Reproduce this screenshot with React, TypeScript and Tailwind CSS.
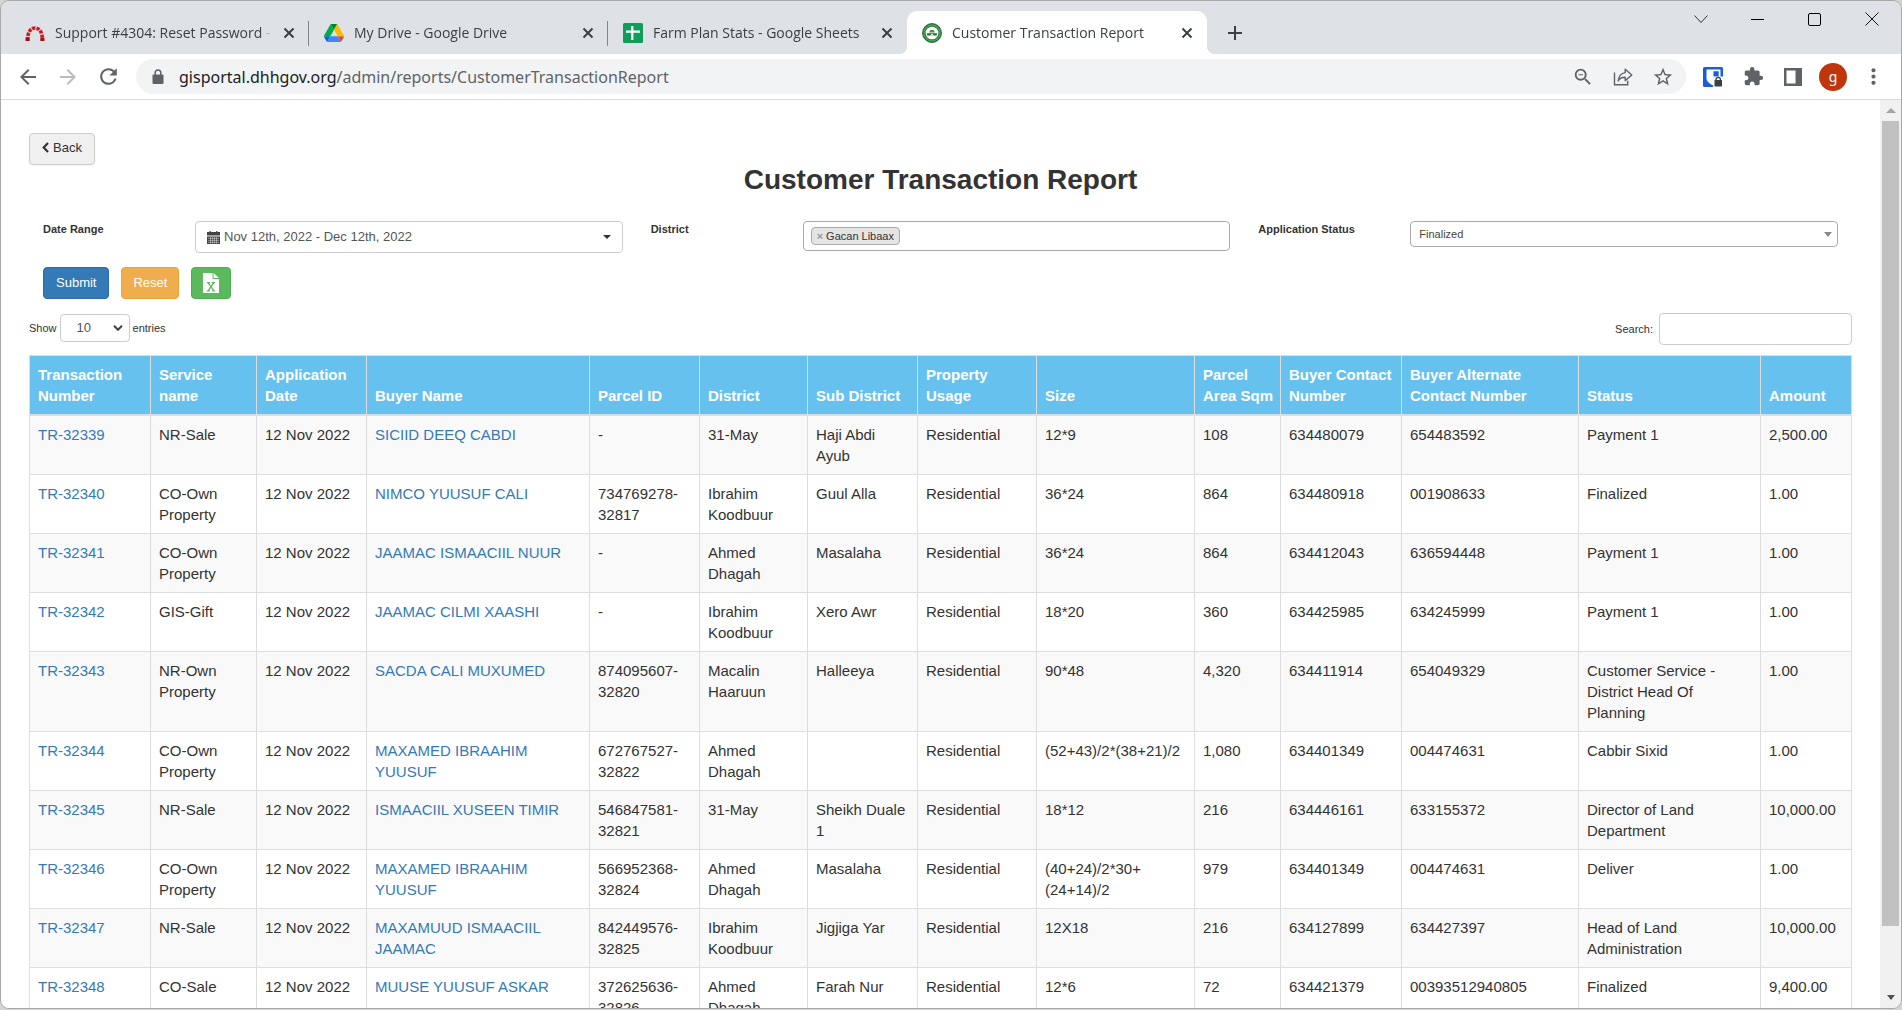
import React from 'react';
import {
  MdArrowBack,
  MdArrowForward,
  MdExtension,
  MdMoreVert,
  MdRefresh,
  MdStarBorder,
  MdZoomOut,
} from 'react-icons/md';

interface Tab {
  title: string;
  icon: React.ReactNode;
  active?: boolean;
  divider?: boolean;
}

interface Column {
  label: string;
  width: string;
}

/* ---------- Icons ---------- */

const RedmineIcon = () => (
  <svg viewBox="0 0 20 20" className="size-5 shrink-0" fill="none">
    <path d="M2.600 17.500C2.600 9 5.500 5 10 5s7.400 4 7.400 12.500" stroke="#d5161d" strokeWidth="3.600" strokeDasharray="3.300 1.100" />
    <path d="M.6 14.500h4V18h-4zM15.400 14.500h4V18h-4z" fill="#a80f14" />
  </svg>
);

const DriveIcon = () => (
  <svg viewBox="0 0 87.3 78" className="size-5 shrink-0">
    <path d="m6.6 66.85 3.85 6.65c.8 1.4 1.95 2.5 3.3 3.3l13.75-23.8h-27.5c0 1.55.4 3.1 1.2 4.5z" fill="#0066da" />
    <path d="m43.65 25-13.75-23.8c-1.35.8-2.5 1.9-3.3 3.3l-25.4 44a9.06 9.06 0 0 0-1.2 4.5h27.5z" fill="#00ac47" />
    <path d="m73.55 76.8c1.35-.8 2.5-1.9 3.3-3.3l1.6-2.75 7.65-13.25c.8-1.4 1.2-2.95 1.2-4.5h-27.5l5.85 11.5z" fill="#ea4335" />
    <path d="m43.65 25 13.75-23.8c-1.35-.8-2.9-1.2-4.5-1.2h-18.5c-1.6 0-3.15.45-4.5 1.2z" fill="#00832d" />
    <path d="m59.8 53h-32.3l-13.75 23.8c1.35.8 2.9 1.2 4.5 1.2h50.8c1.6 0 3.15-.45 4.5-1.2z" fill="#4285f4" />
    <path d="m73.4 26.5-12.7-22c-.8-1.4-1.95-2.5-3.3-3.3l-13.75 23.8 16.15 28h27.45c0-1.55-.4-3.1-1.2-4.5z" fill="#ffba00" />
  </svg>
);

const SheetsIcon = () => (
  <svg viewBox="0 0 20 20" className="size-5 shrink-0">
    <rect width="20" height="20" rx="1.5" fill="#0f9d58" />
    <path d="M8.2 3h2.2v4.5H17v2.2h-6.6V17H8.2V9.7H3V7.5h5.2z" fill="#fff" />
  </svg>
);

const PortalIcon = () => (
  <svg viewBox="0 0 20 20" className="size-5 shrink-0" fill="none">
    <circle cx="10" cy="10" r="9.4" fill="#2f8a3d" stroke="#2a5f33" />
    <circle cx="10" cy="10" r="7.9" stroke="#8cc794" strokeWidth=".8" strokeDasharray="1 .8" />
    <circle cx="10" cy="10" r="6.3" fill="#fff" />
    <path d="M7 9.500 8.300 7h3.400L13 9.500z" fill="#3d9a4b" />
    <path d="M4.800 10.200h10.400l-.6 2.400H5.400z" fill="#226b30" />
    <path d="M8 12.600 10 10.800l2 1.800z" fill="#fff" />
  </svg>
);

const LockIcon = () => (
  <svg viewBox="0 0 12 15" className="h-[15px] w-3 shrink-0">
    <path d="M1.500 5.500h9q1 0 1 1V14q0 1-1 1h-9q-1 0-1-1V6.500q0-1 1-1z" fill="#5f6368" />
    <path d="M3.200 6V3.700a2.800 2.800 0 0 1 5.600 0V6" fill="none" stroke="#5f6368" strokeWidth="1.500" />
  </svg>
);

const ShareIcon = () => (
  <svg viewBox="0 0 20 20" className="size-5" fill="none" stroke="#5f6368" strokeWidth="1.4">
    <path d="M1.500 5.500v12.300h13.200v-4" />
    <path d="M12.200 2.200 18.800 8l-6.600 5.600v-3.300c-3.400 0-5.500 1-7 3.500.5-4 2.800-7.600 7-8.200z" strokeLinejoin="round" />
  </svg>
);

const BitwardenIcon = () => (
  <svg viewBox="0 0 20 20" className="size-5">
    <rect width="20" height="20" rx="1.500" fill="#175ddc" />
    <path d="M3.500 2.500h14v9c0 3-3.500 5.500-7 7-3.500-1.500-7-4-7-7z" fill="#fff" />
    <path d="M10.500 4.300h5.200v6.200c0 2-2.500 4.500-5.200 5.700z" fill="#175ddc" />
    <rect x="10" y="9.500" width="10" height="10.500" fill="#fff" />
    <path d="M11.500 13h7.500v6.500h-7.500z" fill="#3c4043" />
    <path d="M13 13.500v-1a2.200 2.200 0 0 1 4.400 0v1" fill="none" stroke="#3c4043" strokeWidth="1.300" />
  </svg>
);

const SidePanelIcon = () => (
  <svg viewBox="0 0 18 18" className="size-[18px]">
    <path d="M0 0h18v18H0zM2.500 2.500v13h9v-13z" fill="#5f6368" fillRule="evenodd" />
  </svg>
);

const CloseIcon = () => (
  <svg viewBox="0 0 12 12" className="size-3" stroke="#3c4043" strokeWidth="2">
    <path d="m1.500 1.500 9 9m0-9-9 9" />
  </svg>
);

const CalendarIcon = () => (
  <svg viewBox="0 0 13 13" className="size-[13px]" fill="#444">
    <path d="M0 1h2.500V0h1.300v1h5.400V0h1.300v1H13v3.600H0z" />
    <path d="M0 5.400h13V13H0z" />
    <path d="M1 7.400h11M1 9.400h11M1 11.400h11M3.500 6v6.500M5.500 6v6.500M7.500 6v6.500M9.500 6v6.500" stroke="#fff" strokeWidth=".4" />
  </svg>
);

const ExcelIcon = () => (
  <svg viewBox="0 0 16 20" className="h-5 w-4">
    <path d="M0 0h9.500v6H16v14H0z" fill="#fff" />
    <path d="M10.500 0 16 5h-5.500z" fill="#fff" />
    <path d="M4 9h3v1.200h-.7L8 12.800l1.700-2.600H9V9h3v1.200h-.7L8.800 13.700l2.700 3.700h.8v1.200H9.200v-1.200h.6L8 14.800l-1.800 2.600h.6v1.200H3.700v-1.200h.8l2.700-3.700-2.500-3.500H4z" fill="#5cb85c" />
  </svg>
);

/* ---------- Data ---------- */

const tabs: Tab[] = [
  { title: 'Support #4304: Reset Password - ', icon: <RedmineIcon />, divider: true },
  { title: 'My Drive - Google Drive', icon: <DriveIcon />, divider: true },
  { title: 'Farm Plan Stats - Google Sheets', icon: <SheetsIcon /> },
  { title: 'Customer Transaction Report', icon: <PortalIcon />, active: true },
];

const columns: Column[] = [
  { label: 'Transaction Number', width: 'w-[121px]' },
  { label: 'Service name', width: 'w-[106px]' },
  { label: 'Application Date', width: 'w-[110px]' },
  { label: 'Buyer Name', width: 'w-[223px]' },
  { label: 'Parcel ID', width: 'w-[110px]' },
  { label: 'District', width: 'w-[108px]' },
  { label: 'Sub District', width: 'w-[110px]' },
  { label: 'Property Usage', width: 'w-[119px]' },
  { label: 'Size', width: 'w-[158px]' },
  { label: 'Parcel Area Sqm', width: 'w-[86px]' },
  { label: 'Buyer Contact Number', width: 'w-[121px]' },
  { label: 'Buyer Alternate Contact Number', width: 'w-[177px]' },
  { label: 'Status', width: 'w-[182px]' },
  { label: 'Amount', width: 'w-[91px]' },
];

const rows: string[][] = [
  ['TR-32339', 'NR-Sale', '12 Nov 2022', 'SICIID DEEQ CABDI', '-', '31-May', 'Haji Abdi Ayub', 'Residential', '12*9', '108', '634480079', '654483592', 'Payment 1', '2,500.00'],
  ['TR-32340', 'CO-Own Property', '12 Nov 2022', 'NIMCO YUUSUF CALI', '734769278-32817', 'Ibrahim Koodbuur', 'Guul Alla', 'Residential', '36*24', '864', '634480918', '001908633', 'Finalized', '1.00'],
  ['TR-32341', 'CO-Own Property', '12 Nov 2022', 'JAAMAC ISMAACIIL NUUR', '-', 'Ahmed Dhagah', 'Masalaha', 'Residential', '36*24', '864', '634412043', '636594448', 'Payment 1', '1.00'],
  ['TR-32342', 'GIS-Gift', '12 Nov 2022', 'JAAMAC CILMI XAASHI', '-', 'Ibrahim Koodbuur', 'Xero Awr', 'Residential', '18*20', '360', '634425985', '634245999', 'Payment 1', '1.00'],
  ['TR-32343', 'NR-Own Property', '12 Nov 2022', 'SACDA CALI MUXUMED', '874095607-32820', 'Macalin Haaruun', 'Halleeya', 'Residential', '90*48', '4,320', '634411914', '654049329', 'Customer Service - District Head Of Planning', '1.00'],
  ['TR-32344', 'CO-Own Property', '12 Nov 2022', 'MAXAMED IBRAAHIM YUUSUF', '672767527-32822', 'Ahmed Dhagah', '', 'Residential', '(52+43)/2*(38+21)/2', '1,080', '634401349', '004474631', 'Cabbir Sixid', '1.00'],
  ['TR-32345', 'NR-Sale', '12 Nov 2022', 'ISMAACIIL XUSEEN TIMIR', '546847581-32821', '31-May', 'Sheikh Duale 1', 'Residential', '18*12', '216', '634446161', '633155372', 'Director of Land Department', '10,000.00'],
  ['TR-32346', 'CO-Own Property', '12 Nov 2022', 'MAXAMED IBRAAHIM YUUSUF', '566952368-32824', 'Ahmed Dhagah', 'Masalaha', 'Residential', '(40+24)/2*30+(24+14)/2', '979', '634401349', '004474631', 'Deliver', '1.00'],
  ['TR-32347', 'NR-Sale', '12 Nov 2022', 'MAXAMUUD ISMAACIIL JAAMAC', '842449576-32825', 'Ibrahim Koodbuur', 'Jigjiga Yar', 'Residential', '12X18', '216', '634127899', '634427397', 'Head of Land Administration', '10,000.00'],
  ['TR-32348', 'CO-Sale', '12 Nov 2022', 'MUUSE YUUSUF ASKAR', '372625636-32826', 'Ahmed Dhagah', 'Farah Nur', 'Residential', '12*6', '72', '634421379', '00393512940805', 'Finalized', '9,400.00'],
];

const linkColumns = [0, 3];

/* ---------- Browser chrome ---------- */

const TabItem: React.FC<{ tab: Tab }> = ({ tab }) => (
  <div
    className={
      tab.active
        ? 'relative flex w-[300px] items-center gap-[10px] rounded-t-[10px] bg-white pl-[15px] pr-3'
        : 'relative flex w-[299px] items-center gap-[10px] pl-[15px] pr-3'
    }
  >
    {tab.active && (
      <>
        <span className="absolute -left-2 bottom-0 size-2 bg-[radial-gradient(circle_at_0_0,#dee1e6_8px,#fff_8px)]" />
        <span className="absolute -right-2 bottom-0 size-2 bg-[radial-gradient(circle_at_100%_0,#dee1e6_8px,#fff_8px)]" />
      </>
    )}
    {tab.icon}
    <span className="min-w-0 flex-1 overflow-hidden whitespace-nowrap mask-r-from-95% text-[14px]">{tab.title}</span>
    <button aria-label="Close tab" className="flex size-4 items-center justify-center">
      <CloseIcon />
    </button>
    {tab.divider && <span className="absolute right-0 top-[10px] h-[25px] w-px bg-[#80868b]" />}
  </div>
);

const TabStrip = () => (
  <div className="flex h-[53px] shrink-0 justify-between bg-[#dee1e6] font-['Open_Sans',sans-serif] text-[#3c4043]">
    <div className="flex pl-[9px] pt-[10px]">
      {tabs.map((tab) => (
        <TabItem key={tab.title} tab={tab} />
      ))}
      <button aria-label="New tab" className="ml-2 flex w-10 items-center justify-center">
        <svg viewBox="0 0 14 14" className="size-[14px]" stroke="#3c4043" strokeWidth="2">
          <path d="M7 0v14M0 7h14" />
        </svg>
      </button>
    </div>
    <div className="flex h-9 text-black">
      <button aria-label="Search tabs" className="flex w-[57px] items-center justify-center">
        <svg viewBox="0 0 14 14" className="size-[14px]" fill="none" stroke="#333">
          <path d="m.5 3.500 6.500 7 6.500-7" />
        </svg>
      </button>
      <button aria-label="Minimize" className="flex w-[57px] items-center justify-center">
        <span className="h-px w-[13px] bg-black" />
      </button>
      <button aria-label="Maximize" className="flex w-[57px] items-center justify-center">
        <span className="size-[13px] rounded-[2px] border border-black" />
      </button>
      <button aria-label="Close" className="flex w-[58px] items-center justify-center">
        <svg viewBox="0 0 14 14" className="size-[14px]" stroke="#111">
          <path d="m.5.5 13 13m0-13-13 13" />
        </svg>
      </button>
    </div>
  </div>
);

const iconButton = 'flex h-full w-10 shrink-0 items-center justify-center';

const Toolbar = () => (
  <div className="flex h-[46px] shrink-0 items-center border-b border-[#dadce0] bg-white pl-[7px] pr-2 font-['Noto_Sans',sans-serif] text-[#5f6368]">
    <button aria-label="Back" className={iconButton}>
      <MdArrowBack size={24} />
    </button>
    <button aria-label="Forward" className={iconButton}>
      <MdArrowForward size={24} className="text-[#babcbe]" />
    </button>
    <button aria-label="Reload" className={iconButton}>
      <MdRefresh size={25} />
    </button>
    <div className="ml-2 flex h-[35px] flex-1 items-center rounded-full bg-[#f1f3f4] pl-4 pr-[3px]">
      <LockIcon />
      <span className="ml-[15px] flex-1 whitespace-nowrap text-[16px]">
        <span className="text-[#202124]">gisportal.dhhgov.org</span>/admin/reports/CustomerTransactionReport
      </span>
      <button aria-label="Zoom" className={iconButton}>
        <MdZoomOut size={22} />
      </button>
      <button aria-label="Share" className={iconButton}>
        <ShareIcon />
      </button>
      <button aria-label="Bookmark" className={iconButton}>
        <MdStarBorder size={22} />
      </button>
    </div>
    <button aria-label="Bitwarden" className={`ml-[7px] ${iconButton}`}>
      <BitwardenIcon />
    </button>
    <button aria-label="Extensions" className={iconButton}>
      <MdExtension size={21} />
    </button>
    <button aria-label="Side panel" className={iconButton}>
      <SidePanelIcon />
    </button>
    <button aria-label="Profile" className={iconButton}>
      <span className="flex size-7 items-center justify-center rounded-full bg-[#bf360c] text-[14px] text-white">g</span>
    </button>
    <button aria-label="Menu" className={iconButton}>
      <MdMoreVert size={25} />
    </button>
  </div>
);

const Scrollbar = () => (
  <div className="flex w-[21px] shrink-0 flex-col items-center bg-[#f1f1f1]">
    <div className="flex h-[21px] items-center">
      <svg viewBox="0 0 10 5" className="h-[5px] w-[10px]" fill="#a3a3a3">
        <path d="M5 0l5 5H0z" />
      </svg>
    </div>
    <div className="w-full flex-1 px-[2px]">
      <div className="h-[93%] bg-[#c1c1c1]" />
    </div>
    <div className="flex h-[21px] items-center">
      <svg viewBox="0 0 8 5" className="h-[5px] w-2" fill="#505050">
        <path d="M0 0h8L4 5z" />
      </svg>
    </div>
  </div>
);

/* ---------- Report page ---------- */

const Filters = () => (
  <div className="grid grid-cols-3">
    <div className="flex items-start px-[14px]">
      <label htmlFor="date-range" className="w-[152px] text-[11px] leading-4 font-bold">
        Date Range
      </label>
      <button
        id="date-range"
        className="flex h-8 flex-1 items-center gap-1 rounded-[4px] border border-[#ccc] px-[11px] text-[13px] text-[#555]"
      >
        <CalendarIcon />
        Nov 12th, 2022 - Dec 12th, 2022
        <span className="ml-auto border-x-[4px] border-t-[4px] border-x-transparent border-t-[#333]" />
      </button>
    </div>
    <div className="flex items-start px-[14px]">
      <label htmlFor="district" className="w-[152px] text-[11px] leading-4 font-bold">
        District
      </label>
      <div className="flex h-[30px] flex-1 items-center rounded-[4px] border border-[#aaa] px-[7px]">
        <span className="flex h-[18px] items-center gap-[3px] rounded-[4px] border border-[#aaa] bg-[#e4e4e4] px-[5px] text-[11px]">
          <button aria-label="Remove" className="font-bold text-[#999]">
            ×
          </button>
          Gacan Libaax
        </span>
        <input id="district" className="min-w-0 flex-1 outline-none" />
      </div>
    </div>
    <div className="flex items-start px-[14px]">
      <label htmlFor="status" className="w-[152px] text-[11px] leading-4 font-bold">
        Application Status
      </label>
      <div className="relative flex-1">
        <select
          id="status"
          defaultValue="Finalized"
          className="block h-[26px] w-full appearance-none rounded-[4px] border border-[#aaa] bg-white px-2 text-[11px] text-[#444]"
        >
          <option>Finalized</option>
        </select>
        <span className="pointer-events-none absolute right-[6px] top-[11px] border-x-[4px] border-t-[5px] border-x-transparent border-t-[#888]" />
      </div>
    </div>
  </div>
);

const TransactionTable = () => (
  <table className="mt-[10px] w-full table-fixed border-collapse text-[15px] leading-[21px]">
    <thead>
      <tr className="bg-[#67c1ef] text-left align-bottom text-white">
        {columns.map((column) => (
          <th key={column.label} className={`border border-b-2 border-[#ddd] py-2 pl-2 pr-1 font-bold ${column.width}`}>
            {column.label}
          </th>
        ))}
      </tr>
    </thead>
    <tbody>
      {rows.map((row) => (
        <tr key={row[0]} className="align-top odd:bg-[#f9f9f9]">
          {row.map((cell, i) => (
            <td key={i} className="border border-[#ddd] p-2">
              {linkColumns.includes(i) ? (
                <a href="#" className="text-[#337ab7]">
                  {cell}
                </a>
              ) : (
                cell
              )}
            </td>
          ))}
        </tr>
      ))}
    </tbody>
  </table>
);

const ReportPage = () => (
  <main className="min-w-0 flex-1 overflow-hidden bg-white px-7 pt-[33px] font-['Liberation_Sans',Arial,sans-serif] text-[#333]">
    <button className="flex h-8 items-center gap-1 rounded-[4px] border border-[#ccc] bg-[#f0f0f0] px-3 pb-[3px] text-[13px] shadow-xs">
      <svg viewBox="0 0 7 11" className="h-[11px] w-[7px]" fill="none" stroke="#333" strokeWidth="2.200">
        <path d="M6 1 1.700 5.500 6 10" />
      </svg>
      Back
    </button>
    <h1 className="mb-[27px] text-center text-[28px] leading-[29px] font-bold">Customer Transaction Report</h1>
    <Filters />
    <div className="mt-[14px] flex gap-3 px-[14px] text-[13px] text-white">
      <button className="h-8 rounded-[4px] border border-[#2e6da4] bg-[#337ab7] px-3">Submit</button>
      <button className="h-8 rounded-[4px] border border-[#eea236] bg-[#f0ad4e] px-[11px]">Reset</button>
      <button aria-label="Export to Excel" className="flex h-8 items-center rounded-[4px] border border-[#4cae4c] bg-[#5cb85c] px-[11px]">
        <ExcelIcon />
      </button>
    </div>
    <div className="mt-[14px] flex justify-between text-[11px]">
      <label className="flex h-[30px] items-center gap-[3px]">
        Show
        <span className="relative">
          <select
            defaultValue="10"
            className="block h-7 w-[70px] appearance-none rounded-[4px] border border-[#ccc] bg-white px-4 text-[13px] text-[#555]"
          >
            <option>10</option>
          </select>
          <svg viewBox="0 0 10 6" className="pointer-events-none absolute right-[7px] top-[11px] h-[6px] w-[10px]" fill="none" stroke="#444" strokeWidth="2">
            <path d="m1 .8 4 4 4-4" />
          </svg>
        </span>
        entries
      </label>
      <label className="flex items-center gap-[6px]">
        Search:
        <input type="search" className="h-8 w-[193px] rounded-[4px] border border-[#ccc] px-3 text-[13px] outline-none" />
      </label>
    </div>
    <TransactionTable />
  </main>
);

export default function App() {
  return (
    <div className="h-screen bg-[#d4d4d0] pb-px">
      <div className="flex h-full flex-col overflow-hidden rounded-[9px] border border-[#a8a8a8]">
        <TabStrip />
        <Toolbar />
        <div className="flex min-h-0 flex-1">
          <ReportPage />
          <Scrollbar />
        </div>
      </div>
    </div>
  );
}
